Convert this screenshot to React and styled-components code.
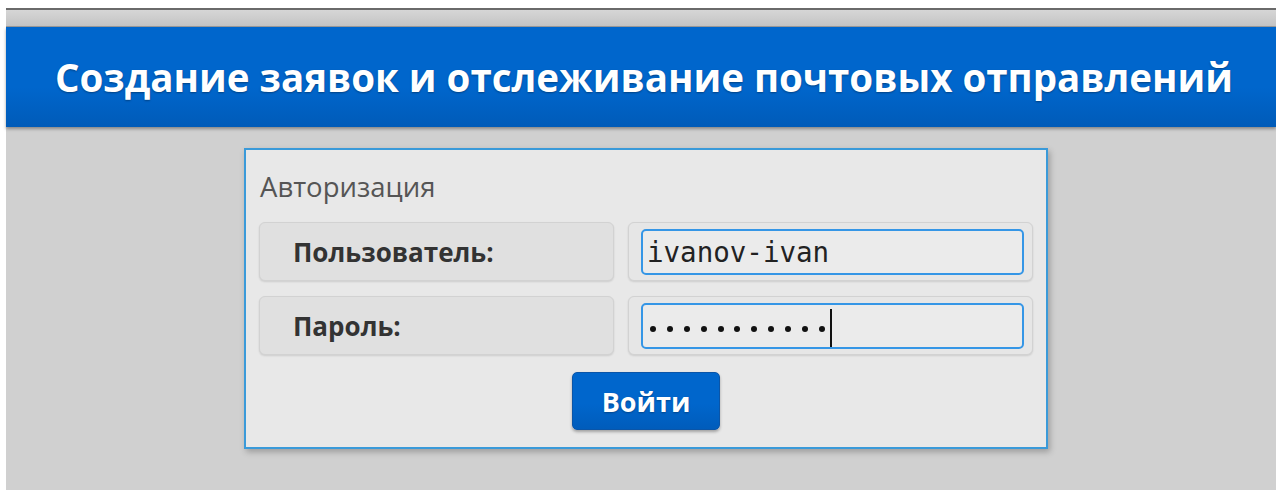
import React from "react";
import styled, { createGlobalStyle } from "styled-components";

const Global = createGlobalStyle`
  html, body { margin: 0; padding: 0; background: #ffffff; }
  body { font-family: "Open Sans", "Noto Sans", sans-serif; }
  #root { min-height: 490px; }
`;

const Page = styled.div`
  margin: 8px 0 0 6px;
  min-height: 482px;
  background: #d0d0d0;
  display: flex;
  flex-direction: column;
`;

const TopStrip = styled.div`
  height: 16px;
  border-top: 2px solid #6a6a6a;
  border-bottom: 1px solid #9a9a9a;
  background: linear-gradient(#d6d6d6, #c4c4c4);
`;

const Header = styled.header`
  height: 100px;
  display: flex;
  align-items: center;
  justify-content: center;
  background: linear-gradient(#0066cc 60%, #005bb8);
  box-shadow: 0 2px 3px rgba(0, 0, 0, 0.35);
  position: relative;
  z-index: 1;
`;

const Title = styled.h1`
  margin: 0;
  padding-left: 6px;
  color: #ffffff;
  font-family: "Open Sans", sans-serif;
  font-weight: 700;
  font-size: 38.5px;
  white-space: nowrap;
  text-shadow: 0 1px 2px rgba(0, 0, 0, 0.35);
`;

const Main = styled.main`
  padding: 21px 0 0 238px;
`;

const Panel = styled.form`
  width: 774px;
  box-sizing: content-box;
  border: 2px solid #3a9ad9;
  background: #e8e8e8;
  box-shadow: 2px 3px 6px rgba(0, 0, 0, 0.25);
  padding: 20px 13px 17px 13px;
  display: flex;
  flex-direction: column;
`;

const Legend = styled.div`
  font-size: 27.5px;
  color: #555555;
  padding-left: 1px;
  line-height: 34px;
  margin-bottom: 18px;
`;

const Row = styled.div`
  display: grid;
  grid-template-columns: 355px 405px;
  column-gap: 14px;
  margin-bottom: 15px;
`;

const Cell = styled.div`
  height: 59px;
  box-sizing: border-box;
  border: 1px solid #d2d2d2;
  border-radius: 6px;
  background: ${(p) => (p.$label ? "#e0e0e0" : "#e6e6e6")};
  box-shadow: 0 1px 2px rgba(0, 0, 0, 0.12);
  display: flex;
  align-items: center;
  padding: ${(p) => (p.$label ? "0 0 0 33px" : "6px 8px 5px 12px")};
`;

const Label = styled.label`
  font-size: 26px;
  font-weight: 700;
  color: #333333;
`;

const Field = styled.div`
  flex: 1;
  height: 100%;
  box-sizing: border-box;
  border: 2px solid #3596e6;
  border-radius: 5px;
  background: #ebebeb;
  display: flex;
  align-items: center;
  padding-left: 4px;
  font-family: "DejaVu Sans Mono", monospace;
  font-size: 27.5px;
  color: #222222;
`;

const Dots = styled.span`
  display: flex;
  gap: 10.9px;
  align-items: center;
  padding-left: 3px;
  margin-top: 5px;
`;

const Dot = styled.span`
  width: 6px;
  height: 6px;
  border-radius: 50%;
  background: #111111;
`;

const Caret = styled.span`
  width: 2px;
  height: 38px;
  background: #111111;
  margin-left: 5px;
  margin-top: 4px;
`;

const Actions = styled.div`
  display: flex;
  justify-content: center;
  margin-top: 2px;
`;

const Button = styled.button`
  width: 148px;
  height: 58px;
  border: 1px solid #0a55a8;
  border-radius: 5px;
  background: linear-gradient(#0066cc 55%, #005cbb);
  box-shadow: 0 2px 3px rgba(0, 0, 0, 0.3);
  color: #ffffff;
  font-family: "Open Sans", sans-serif;
  font-weight: 700;
  font-size: 27px;
  text-shadow: 0 1px 2px rgba(0, 0, 0, 0.3);
  cursor: pointer;
`;

export default function App() {
  const dots = Array.from({ length: 11 });
  return (
    <>
      <Global />
      <Page>
        <TopStrip />
        <Header>
          <Title>Создание заявок и отслеживание почтовых отправлений</Title>
        </Header>
        <Main>
          <Panel onSubmit={(e) => e.preventDefault()}>
            <Legend>Авторизация</Legend>
            <Row>
              <Cell $label>
                <Label>Пользователь:</Label>
              </Cell>
              <Cell>
                <Field>ivanov-ivan</Field>
              </Cell>
            </Row>
            <Row>
              <Cell $label>
                <Label>Пароль:</Label>
              </Cell>
              <Cell>
                <Field>
                  <Dots>
                    {dots.map((_, i) => (
                      <Dot key={i} />
                    ))}
                  </Dots>
                  <Caret />
                </Field>
              </Cell>
            </Row>
            <Actions>
              <Button type="submit">Войти</Button>
            </Actions>
          </Panel>
        </Main>
      </Page>
    </>
  );
}
